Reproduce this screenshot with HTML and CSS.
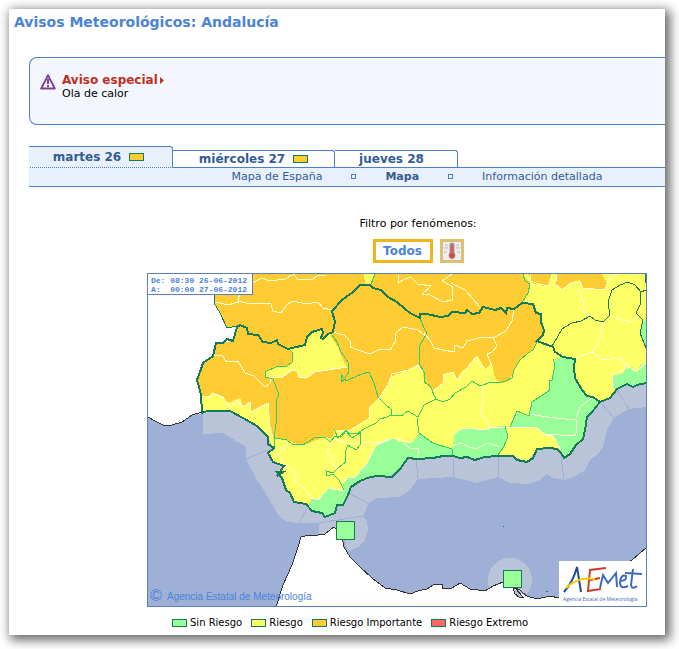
FILE: index.html
```html
<!DOCTYPE html>
<html lang="es">
<head>
<meta charset="utf-8">
<meta name="viewport" content="width=device-width, initial-scale=1">
<title>Avisos Meteorológicos: Andalucía</title>
<link rel="stylesheet" href="styles.css">
</head>
<body>
<main class="page">
  <h1 class="title">Avisos Meteorológicos: Andalucía</h1>

  <section class="notice">
    <svg class="notice-icon" viewBox="0 0 16 16" aria-hidden="true">
      <path d="M8 1.4 1.2 14.6h13.6z" fill="#fff" stroke="#7d3f98" stroke-width="2" stroke-linejoin="round"/>
      <path d="M8 5v5M8 11v2" stroke="#7d3f98" stroke-width="2"/>
    </svg>
    <div class="notice-text">
      <a class="notice-link" href="#aviso">Aviso especial<svg class="caret" viewBox="0 0 4 7" aria-hidden="true"><path d="M0 0v7l4-3.5z" fill="#c03020"/></svg></a>
      <p>Ola de calor</p>
    </div>
  </section>

  <nav class="tabs">
    <a class="tab tab-active" href="#d26">martes 26 <i class="chip orange"></i></a>
    <a class="tab tab-mid" href="#d27">miércoles 27 <i class="chip orange"></i></a>
    <a class="tab tab-last" href="#d28">jueves 28</a>
  </nav>
  <nav class="subnav">
    <a href="#espana">Mapa de España</a>
    <i class="sep"></i>
    <a class="current" href="#mapa">Mapa</a>
    <i class="sep"></i>
    <a href="#detalle">Información detallada</a>
  </nav>

  <section class="content">
    <div class="filter">
      <p>Filtro por fenómenos:</p>
      <div class="filter-buttons">
        <button class="filter-all" type="button">Todos</button>
        <button class="filter-temp" type="button" aria-label="Temperaturas máximas">
          <svg viewBox="0 0 18 18" aria-hidden="true">
            <path d="M2 2l3 2M1 6h4M1 11l3-2M16 2l-3 2M17 6h-4M17 11l-3-2" stroke="#bbb" fill="none"/>
            <path d="M9 3v9" stroke="#999" stroke-width="5" stroke-linecap="round"/>
            <path d="M9 4v9" stroke="#e05858" stroke-width="3" stroke-linecap="round"/>
            <circle cx="9" cy="13.500" r="3" fill="#d84848" stroke="#a88"/>
          </svg>
        </button>
      </div>
    </div>

    <div class="map">
      <svg class="map-drawing" viewBox="148 274 498 332" role="img" aria-label="Mapa de avisos de Andalucía">
        <rect x="148" y="274" width="498" height="332" fill="#9fb0d6"/>
        <path class="coastal" d="M203 400V434L223 433 246 447V459L257 480 265 492 278 515 287 522 299 523H319V540H345L348 551 358 547 365 540 368 530 367 521 363 516 369 503 377 498 400 497 409 491 418 479 453 477 477 483 498 477 510 483 528 484 538 481 547 474 553 478 564 480 574 477 585 470 590 460 597 455 603 447 607 430 614 418 629 409 646 407V350H300z"/>
        <circle class="coastal" cx="510" cy="580" r="22"/>
        <path class="zones" d="M246 459 268 450M299 523 307 508M319 523 363 516M349 493 369 504M416 459 418 479M453 458V477M498 456V477M561 456 564 480M601 403 614 418M617 390 629 409"/>
        <path fill="#fff" d="M148 274H230L240 327 210 412 192 415 182 422 172 425 163 425 155 421 148 417z"/>
        <path class="africa" d="M276 607 283 585 292 565 298 547 301 537 305 536 318 535 325 534 330 530 334 527 342 536 344 547 350 557 360 567 372 578 385 588 397 590 410 594 418 591 427 589 433 585 442 584 443 589 452 588 460 583 470 589 485 591 493 586 503 582 513 588 518 589 527 596 537 599 550 596 559 598 632 560 647 547V607z"/>
        <path fill="#b9c4d8" stroke="#333" d="M513 588l2 6 4 3h4l-7-8 4 1 6 6"/>

        <!-- land -->
        <path fill="#ff6" d="M214 274V303L220 313 227 328 237 327 233 341 216 343 213 356 203 363 197 380 201 395 202 413 207 411 230 411 243 418 257 426 268 437 273 448 268 453 273 462 283 467 277 472 282 478 286 490 290 493 294 502 306 504 312 511 322 513 325 517 335 513 337 505 343 505 348 495 351 487 360 481 370 477 387 477 400 469 408 458 433 458 443 456 470 458 497 456 513 456 527 462 537 449 557 449 564 458 583 439 587 417 600 402 610 398 617 389 627 384 633 387 637 385 646 383V274z"/>

        <!-- important risk -->
        <path fill="#fc3" d="M214 274H523L525 278 530 283 528 293 522 303 533 304 536 313 541 314V322L544 330 537 343 533 350 520 360 513 373 508 382 500 383 495 378 492 363 485 369 482 363 477 355 467 368 461 372 457 380 453 372 443 375V383L433 391 424 382 423 372 418 365 400 373 390 377 388 385 380 397 369 408 370 418 350 430H335L332 438 323 437 310 443 300 445 287 440 273 438 270 427 268 403 251 412 250 402 243 406 240 398 228 403 223 397 212 393 210 397 202 396 197 380 203 363 213 356 216 343 233 341 237 327 227 328 220 313 214 303z"/>
        <path fill="#fc3" d="M528 274 533 284 538 283 543 286 549 285 551 274zM556 274 557 280 554 283 562 290 572 282 580 280 583 288 605 290 607 283 602 274z"/>
        <path fill="#ff6" d="M364 274 365 283 370 285 375 274zM288 349 293 353V362L287 366 277 367 268 370 265 375 266 377H283L292 370 297 371 299 377H308L315 372 327 370 347 367 343 360 339 348 333 340 330 333 323 339 321 338 323 333 322 329 312 332 307 337 305 345z"/>

        <!-- no risk -->
        <path class="norisk" d="M555 359 562 357 575 359 574 367 575 378 582 390 587 396 600 402 587 417 585 430 583 439 576 445 564 458 557 443 553 436 546 435 538 428 510 427 516 412 523 415 529 416 532 402 550 390 549 380 553 380z"/>
        <path class="norisk" d="M309 505 312 498 317 500 323 493 328 488 344 491 343 483 348 477 355 477 367 463 377 445 393 438 400 442 412 443 419 433 433 443 452 449 455 433 463 428 487 430 490 427 505 426 508 437 503 448 498 456 470 458 443 456 433 458H408L400 469 387 477 370 477 360 481 351 487 348 495 343 505 337 505 335 513 325 517 322 513 312 511z"/>
        <path class="norisk" d="M646 363 640 365 638 372 632 367 624 370 623 374 612 375 613 388 617 389 627 384 633 387 646 383zM646 320 643 322 640 333 646 348z"/>

        <!-- warning areas -->
        <path class="areas" d="M214 302 220 303 228 305 235 303 240 301 249 304 262 303 271 304 273 311 281 313 287 305 292 301 307 304 318 302 323 308 332 310M238 303V298L243 290 250 284 262 278 270 281 285 279 294 274 297 279 312 280 318 275 326 276M398 274V283L405 279 411 277 418 284 431 286 422 294 430 295 443 302 452 300 453 287 442 281 452 274M451 283 465 290 480 307M514 309 512 321 506 331 493 338 483 337 467 341 463 348 455 345 454 352 443 350 434 348 430 340 424 333M332 332 344 335 350 341 350 347 358 350 370 354 380 349 390 350 395 342 396 333 403 327 418 330 427 337M493 338 497 346 492 352 487 354 492 366M476 356 480 365 485 368M214 355 223 356 226 362 238 361 245 373 254 376 265 387 270 383 271 378M202 396 210 397 212 393 223 397 226 403 231 407 237 400 243 407 250 402 251 412 268 403 270 427 273 438M265 377H283L292 370 297 371 299 377H308L315 372 347 367M433 391 443 383V375L453 372 457 380 467 368 477 356M423 372 418 365 408 370 392 374 388 385 380 397 369 408 370 418 350 430 338 432M332 438 327 452 332 458 332 464 340 470M287 444 278 454 283 463 290 469 298 474 294 481 305 489 312 498M344 491 328 488 324 493 318 500 312 498M330 438 350 444 363 443 380 442 393 438 412 443M393 438 375 446 367 463 355 477 348 477 343 483M417 459 419 449 410 448 403 443M452 446 462 443 469 447 476 449 488 443 500 447M482 385 484 400 480 412 488 423 490 427M455 433 463 428 488 430 490 427 534 427 546 435 553 436 561 450M529 414 547 417 566 419 576 420 577 432 574 436 545 434M576 418 580 407 593 397M575 358 592 352 603 360 620 358 625 365M612 388V375L624 370 624 362 636 372 646 363M530 274 531 281 538 284 549 286 552 275M556 274 557 280 554 283 562 290 572 282 580 282 583 288 605 290 608 281 616 275M578 288 584 302 583 311 590 316M610 315 622 320 631 322 639 315M603 322 600 338 597 345 592 352"/>
        <path class="provinces" d="M523 274 525 281 530 284 528 293 522 303M375 274 371 284M420 318 424 328 427 333 420 345 419 363 424 372 424 382 430 386 436 399M436 399 443 402 450 399 455 393 466 387 472 381 480 386 491 382 500 383 512 378 514 370 520 360 528 353 533 350 537 342M436 399 424 405 418 417 408 411 401 416 391 415 387 417 380 419 376 423 364 429 358 433 350 434 346 430 338 438 334 429M332 335 337 342 341 352 348 362 349 372 342 382 341 374 346 381 357 376 362 374 369 372 374 383 378 397 386 405 391 409 391 416M289 349 293 353 292 362 287 366 276 367 265 372 265 377 273 379 279 395 276 401 276 424 274 438 275 447M275 438 287 440 292 444 303 445 314 438 325 437 330 442 335 436 341 437 346 431 352 438 360 433 360 445 356 450 348 445 345 452 346 462 338 468 333 473 326 471 327 476 333 474 339 480 344 490M417 418 419 433 433 443 452 449 453 457M553 359 555 365 552 380 549 381 550 390 532 402 529 416 517 411 510 427M505 426 508 437 503 448 498 455"/>

        <!-- borders and coast -->
        <path class="border-thin" d="M215 295 214 303 220 313 227 328 237 326M646 290 641 292 635 285 628 282 620 285 612 290 608 302 610 315 603 322 595 320 590 316 581 321 572 323 562 329 557 338 552 346M641 292 640 305 636 313 643 320 640 333 646 348M645 274V283"/>
        <path class="border" d="M202 413 201 395 199 387 197 380 200 372 203 363 213 356 216 343 223 343 227 339 233 341 237 327 240 325 247 328 248 334 258 335 263 342 271 343 277 340 278 344 288 349 305 345 307 337 312 332 322 329 323 333 321 338 323 339 328 334 333 332 335 322 332 311 342 300 353 292 360 285H370L373 288 381 290 388 297 397 302 405 309 410 313 420 318V314L427 314 440 317 448 316 452 312 465 313 467 310 472 314 479 313 483 307 495 310 501 308 506 313 507 308 514 309 522 303 533 304 536 313 541 314V322L544 330 543 335 537 341 545 344 553 347 555 352 563 357 575 359 574 367 575 378 582 390 587 396 593 397 600 402 592 412 587 417 585 430 583 439 576 445 570 454 564 458 561 453 557 449 550 448 537 449 533 458 527 462 517 460 513 456H497L485 457 475 460 467 457 460 458 453 456 443 456 433 458 417 459 408 458 400 469 392 477 378 476 370 477 360 481 351 487 348 495 343 505 337 505 335 513 325 517 322 513 312 511 306 504 294 502 290 493 286 490 282 478 277 472 283 472 277 476 284 466 273 462 268 453 274 448 268 444V437L257 426 243 418 230 411H207zM600 402 610 398 617 389 627 384 633 387 637 385 646 383"/>
        <path class="shore" d="M148 417 155 421 163 425 172 425 182 422 192 415 202 412"/>
        <path d="M503 526h1M546 591h1v1" stroke="#137a5a"/>
        <path class="city" d="M336.500 521.500h18v18h-18zM503.500 570.500h18v17h-18z"/>

        <!-- agency logo -->
        <rect x="559" y="561" width="87" height="45" fill="#fff"/>
        <g class="logo">
          <path d="M564 592Q573 582 577 567L581 592" stroke="#1f4a9c"/>
          <path d="M606 568 590 570 588 591 601 589M590 580 600 578" stroke="#c8402c"/>
          <path d="M566 588Q578 576 595 579" stroke="#fc0"/>
          <path d="M600 588 603 575 608 583 616 573 617 587M620 581Q627 581 626 576 621 574 620 582 620 590 628 586M633 569 631 585Q632 590 637 586M625 573 642 574" stroke="#3c6cb8"/>
        </g>
        <text class="logo-text" x="563" y="601">Agencia Estatal de Meteorología</text>
        <text class="credit" x="150" y="601"><tspan class="copy">©</tspan><tspan x="167" y="600">Agencia Estatal de Meteorología</tspan></text>
      </svg>
      <pre class="validity">De: 08:30 26-06-2012
A:  00:00 27-06-2012</pre>
    </div>

    <ul class="legend">
      <li><i class="chip green"></i>Sin Riesgo</li>
      <li><i class="chip yellow"></i>Riesgo</li>
      <li><i class="chip orange"></i>Riesgo Importante</li>
      <li><i class="chip red"></i>Riesgo Extremo</li>
    </ul>
  </section>
</main>
</body>
</html>
```
FILE: styles.css
```css
* { box-sizing: border-box; }

body {
  margin: 0;
  padding: 9px 14px 14px 9px;
  background: #fff;
  color: #000;
  font: 11px/13px Verdana, "DejaVu Sans", sans-serif;
}

p, ul, pre, h1 { margin: 0; padding: 0; }
a { color: inherit; text-decoration: none; }

.page {
  padding: 4px 0 6px 20px;
  background: #fff;
  box-shadow: 3px 3px 10px 2px rgba(0, 0, 0, .6);
}

.title {
  margin-left: -15px;
  color: #4b83d6;
  font-size: 14px;
  line-height: 18px;
}

.notice {
  display: flex;
  gap: 6px;
  height: 68px;
  margin-top: 26px;
  padding: 16px 10px;
  border: 1px solid #4a80cc;
  border-right: 0;
  border-radius: 8px 0 0 8px;
  background: #f4f7ff;
}
.notice-icon { width: 16px; height: 16px; }
.notice-link { display: flex; align-items: center; gap: 2px; color: #c03020; font-size: 12px; font-weight: bold; }
.caret { width: 4px; height: 7px; }

.tabs {
  display: flex;
  align-items: flex-end;
  margin-top: 21px;
  color: #345c94;
  font-size: 12px;
  font-weight: bold;
}
.tab {
  display: flex;
  align-items: center;
  justify-content: center;
  gap: 8px;
  height: 17px;
  border: 1px solid #4a80cc;
  border-width: 1px 1px 0 0;
  border-radius: 0 3px 0 0;
}
.tab-active {
  width: 144px;
  height: 21px;
  padding-right: 4px;
  background: #e8f0fc;
}
.tab-mid { width: 162px; }
.tab-last { width: 123px; padding-right: 9px; }

.chip {
  width: 15px;
  height: 8px;
  border: 1px solid #137a5a;
}
.green { background: #9f9; }
.yellow { background: #ff6; }
.orange { background: #fc3; }
.red { background: #f66; }

.subnav {
  display: flex;
  align-items: center;
  justify-content: center;
  gap: 29px;
  height: 20px;
  padding-left: 140px;
  border-bottom: 1px solid #4a80cc;
  background:
    linear-gradient(#4a80cc, #4a80cc) 144px 0 / 100% 1px no-repeat,
    repeating-linear-gradient(90deg, #e8f0fc 0 1px, #4a80cc 1px 2px) 0 0 / 144px 1px no-repeat,
    #e8f0fc;
  color: #345c94;
}
.current { font-weight: bold; }
.sep { width: 5px; height: 5px; border: 1px solid #4a80cc; }

.content {
  padding: 30px 18px 0 118px;
}
.filter {
  display: flex;
  flex-direction: column;
  align-items: center;
  gap: 9px;
  padding-left: 42px;
}
.filter-buttons { display: flex; gap: 7px; }
.filter button {
  display: grid;
  place-items: center;
  height: 24px;
  padding: 0;
  border: 3px solid #f0b41c;
  background: #fff;
}
.filter .filter-all {
  width: 60px;
  color: #4b83d6;
  font: bold 12px/16px Verdana, "DejaVu Sans", sans-serif;
}
.filter .filter-temp { width: 24px; border-color: #dcc070; background: #eee; }
.filter-temp svg { width: 18px; height: 18px; }

.map { position: relative; margin-top: 10px; border: 1px solid #5b80b8; }
.map-drawing { display: block; width: 100%; shape-rendering: crispEdges; }
.coastal { fill: #b9c4d8; }
.zones { fill: none; stroke: #9fb0d6; }
.africa { fill: #fff; stroke: #333; }
.shore { fill: none; stroke: #333; }
.norisk { fill: #9f9; }
.areas { fill: none; stroke: #ffffd8; }
.provinces { fill: none; stroke: #3c6; }
.border-thin { fill: none; stroke: #137a5a; }
.border { fill: none; stroke: #137a5a; stroke-width: 2; }
.city { fill: #9f9; stroke: #137a5a; }
.logo { fill: none; stroke-width: 2; shape-rendering: geometricPrecision; }
.credit { fill: #4b83d6; font: 10px "Liberation Sans", sans-serif; }
.copy { font-size: 16px; }
.logo-text { fill: #3c6cb8; font: 5px "Open Sans", sans-serif; }

.validity {
  position: absolute;
  top: 0;
  left: 0;
  padding: 2px 5px 0 3px;
  border: 1px solid #5b80b8;
  border-width: 0 1px 1px 0;
  background: #fff;
  color: #4b83d6;
  font: bold 8px/9px "Liberation Mono", monospace;
}

.legend {
  display: flex;
  gap: 9px;
  margin-top: 10px;
  padding-left: 25px;
  list-style: none;
  font-size: 10px;
  line-height: 12px;
}
.legend li { display: flex; align-items: center; gap: 3px; white-space: nowrap; }
```
